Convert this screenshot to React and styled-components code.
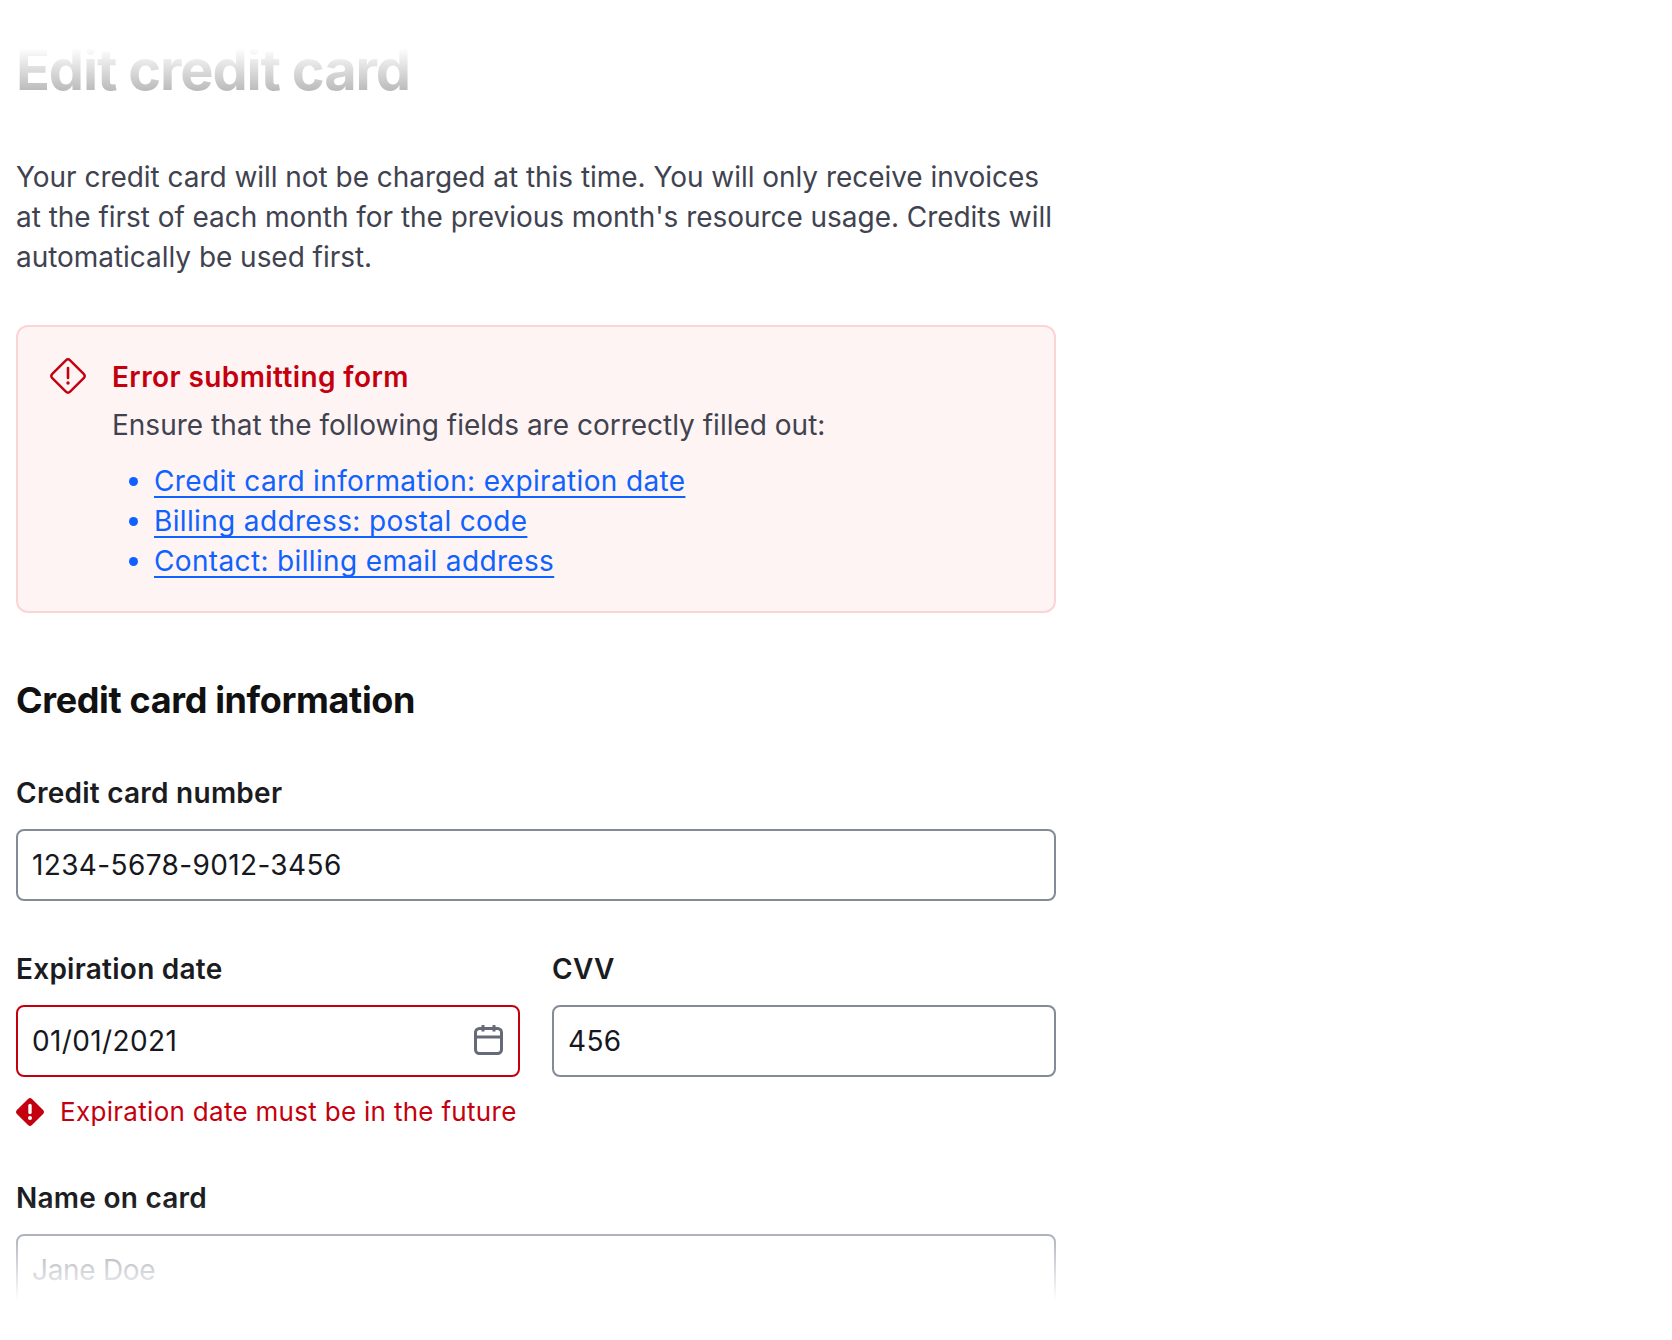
import React from 'react'
import styled, { createGlobalStyle } from 'styled-components'

const GlobalStyle = createGlobalStyle`
  html, body {
    margin: 0;
    padding: 0;
    background: #fff;
  }
  body {
    font-family: 'Inter', 'Liberation Sans', sans-serif;
    font-size: 28px;
    line-height: 40px;
    color: #3f4350;
  }
`

const Page = styled.div`
  position: relative;
  height: 1340px;
  overflow: hidden;
`

const Content = styled.main`
  width: 1040px;
  padding: 34px 0 0 16px;
`

const TopFade = styled.div`
  position: absolute;
  top: 0;
  left: 0;
  right: 0;
  height: 130px;
  background: linear-gradient(
    to bottom,
    #fff 48px,
    rgba(255, 255, 255, 0.68) 96px,
    rgba(255, 255, 255, 0) 130px
  );
  pointer-events: none;
`

const BottomFade = styled.div`
  position: absolute;
  bottom: 0;
  left: 0;
  right: 0;
  height: 140px;
  background: linear-gradient(to top, #fff 40px, rgba(255, 255, 255, 0) 140px);
  pointer-events: none;
`

const Title = styled.h1`
  margin: 0 0 51px;
  font-size: 56px;
  line-height: 72px;
  font-weight: 700;
  letter-spacing: -1.2px;
  color: #111;
`

const Intro = styled.p`
  margin: 0 0 48px;
  letter-spacing: -0.04px;
`

const Alert = styled.section`
  display: flex;
  gap: 26px;
  box-sizing: border-box;
  padding: 30px 30px 30px 32px;
  border: 2px solid #fbd5d5;
  border-radius: 12px;
  background: #fff4f4;
`

const AlertBody = styled.div`
  flex: 1;
`

const AlertTitle = styled.h3`
  margin: 0 0 8px;
  font-size: 28px;
  line-height: 40px;
  font-weight: 600;
  letter-spacing: 0.4px;
  color: #c4000e;
`

const AlertText = styled.p`
  margin: 0 0 16px;
`

const ErrorList = styled.ul`
  margin: 0;
  padding: 0 0 0 42px;
  color: #0f62fe;
`

const ErrorLink = styled.a`
  color: #0f62fe;
  letter-spacing: 0.35px;
  text-decoration: underline;
  text-decoration-thickness: 2px;
  text-decoration-skip-ink: none;
  text-underline-offset: 5px;
`

const SectionTitle = styled.h2`
  margin: 63px 0 49px;
  font-size: 36px;
  line-height: 48px;
  font-weight: 700;
  letter-spacing: -0.36px;
  color: #111;
`

const Field = styled.div`
  flex: 1;
  min-width: 0;
  margin-bottom: ${(p) => p.$gap ?? 48}px;
`

const Row = styled.div`
  display: flex;
  gap: 32px;
`

const Label = styled.label`
  display: block;
  margin-bottom: 16px;
  font-weight: 600;
  letter-spacing: 0.25px;
  color: #1a1c21;
`

const InputWrap = styled.div`
  position: relative;
`

const Input = styled.input`
  display: block;
  box-sizing: border-box;
  width: 100%;
  height: 72px;
  padding: 0 14px;
  border: 2px solid ${(p) => (p.$invalid ? '#c4000e' : '#858a98')};
  border-radius: 8px;
  background: #fff;
  outline: none;
  font: inherit;
  letter-spacing: 0.37px;
  color: #16181d;

  &::placeholder {
    color: #6b7080;
    opacity: 1;
    letter-spacing: -0.3px;
  }
`

const CalendarIcon = styled.svg`
  position: absolute;
  top: 20px;
  right: 17px;
  width: 29px;
  height: 30px;
  color: #646a78;
`

const ErrorLine = styled.div`
  display: flex;
  align-items: center;
  gap: 16px;
  margin-top: 15px;
  white-space: nowrap;
  font-size: 26px;
  letter-spacing: 0.3px;
  color: #c4000e;
`

const AlertIconSvg = styled.svg`
  flex: none;
  width: 36px;
  height: 36px;
  margin-top: 1px;
`

const ErrorIconSvg = styled.svg`
  flex: none;
  width: 28px;
  height: 28px;
`

const AlertIcon = () => (
  <AlertIconSvg viewBox="0 0 36 36" fill="none">
    <path
      d="M15.9 2.3a3 3 0 0 1 4.2 0l13.6 13.6a3 3 0 0 1 0 4.2L20.1 33.7a3 3 0 0 1-4.2 0L2.3 20.1a3 3 0 0 1 0-4.2z"
      stroke="#c4000e"
      strokeWidth="2.4"
      strokeLinejoin="round"
    />
    <path d="M18 10v10" stroke="#c4000e" strokeWidth="2.6" strokeLinecap="round" />
    <circle cx="18" cy="25" r="1.7" fill="#c4000e" />
  </AlertIconSvg>
)

const ErrorIcon = () => (
  <ErrorIconSvg viewBox="0 0 28 28">
    <path
      d="M12 .9a3 3 0 0 1 4 0l11.1 11.1a3 3 0 0 1 0 4L16 27.1a3 3 0 0 1-4 0L.9 16a3 3 0 0 1 0-4z"
      fill="#c4000e"
    />
    <path d="M14 7.5v7" stroke="#fff" strokeWidth="3.4" strokeLinecap="round" />
    <circle cx="14" cy="20" r="2" fill="#fff" />
  </ErrorIconSvg>
)

const App = () => (
  <Page>
    <GlobalStyle />
    <Content>
      <Title>Edit credit card</Title>
      <Intro>
        Your credit card will not be charged at this time. You will only receive invoices at the
        first of each month for the previous month's resource usage. Credits will automatically be
        used first.
      </Intro>

      <Alert>
        <AlertIcon />
        <AlertBody>
          <AlertTitle>Error submitting form</AlertTitle>
          <AlertText>Ensure that the following fields are correctly filled out:</AlertText>
          <ErrorList>
            <li>
              <ErrorLink href="#expiration">Credit card information: expiration date</ErrorLink>
            </li>
            <li>
              <ErrorLink href="#postal">Billing address: postal code</ErrorLink>
            </li>
            <li>
              <ErrorLink href="#email">Contact: billing email address</ErrorLink>
            </li>
          </ErrorList>
        </AlertBody>
      </Alert>

      <SectionTitle>Credit card information</SectionTitle>

      <Field>
        <Label>Credit card number</Label>
        <Input readOnly defaultValue="1234-5678-9012-3456" />
      </Field>

      <Row>
        <Field $gap={46}>
          <Label>Expiration date</Label>
          <InputWrap>
            <Input $invalid readOnly defaultValue="01/01/2021" />
            <CalendarIcon viewBox="0 0 29 30" fill="none" stroke="currentColor" strokeWidth="3">
              <rect x="1.5" y="3.5" width="26" height="25" rx="4" />
              <path d="M1.5 12h26M9 0v6.5M20 0v6.5" />
            </CalendarIcon>
          </InputWrap>
          <ErrorLine>
            <ErrorIcon />
            Expiration date must be in the future
          </ErrorLine>
        </Field>
        <Field $gap={46}>
          <Label>CVV</Label>
          <Input readOnly defaultValue="456" />
        </Field>
      </Row>

      <Field>
        <Label>Name on card</Label>
        <Input readOnly placeholder="Jane Doe" />
      </Field>
    </Content>
    <TopFade />
    <BottomFade />
  </Page>
)

export default App
